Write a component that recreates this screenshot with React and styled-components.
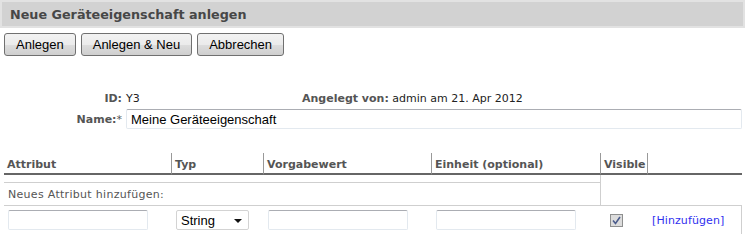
import React from 'react';
import styled, { createGlobalStyle } from 'styled-components';

const GlobalStyle = createGlobalStyle`
  body {
    margin: 0;
    background: #fff;
    font-family: "DejaVu Sans", Verdana, sans-serif;
  }
`;

const Page = styled.div`
  width: 745px;
  height: 252px;
  overflow: hidden;
`;

const TitleBar = styled.div`
  height: 24px;
  background: #d2d2d2;
  border: 2px solid #e2e2e2;
  display: flex;
  align-items: center;
  padding-left: 8px;
  font-size: 12.75px;
  font-weight: bold;
  color: #474747;
`;

const Toolbar = styled.div`
  display: flex;
  gap: 5px;
  padding: 5px 4px 0;
`;

const Button = styled.button`
  height: 23px;
  padding: 0 11px;
  font-family: "Liberation Sans", Arial, sans-serif;
  font-size: 13px;
  color: #000;
  border: 1px solid #707070;
  border-radius: 3px;
  background: linear-gradient(#f2f2f2 0%, #ebebeb 50%, #dddddd 51%, #cfcfcf 100%);
`;

const Meta = styled.div`
  display: grid;
  grid-template-columns: 122px 1fr;
  column-gap: 4px;
  row-gap: 3px;
  align-items: center;
  margin-top: 34px;
  padding-right: 3px;
  font-size: 11px;
  color: #222;
`;

const Label = styled.span`
  text-align: right;
  font-weight: bold;
  color: #555;
`;

const Required = styled.span`
  font-weight: normal;
`;

const ValueLine = styled.div`
  display: flex;
  height: 16px;
  align-items: center;
`;

const IdValue = styled.span`
  width: 176px;
`;

const TextInput = styled.input`
  box-sizing: border-box;
  width: ${p => p.$w || 140}px;
  height: 20px;
  padding: 0 4px;
  font-family: "Liberation Sans", Arial, sans-serif;
  font-size: 13px;
  color: #000;
  border: 1px solid #e3e9ef;
  border-top-color: #abadb3;
  border-radius: 2px;
  outline: none;
`;

const Grid = styled.div`
  display: grid;
  grid-template-columns: 167px 92px 168px 169px 47px 95px;
  margin: 24px 0 0 4px;
  font-size: 11px;
`;

const HeadCell = styled.div`
  height: 18px;
  padding: 2px 0 0 3px;
  font-weight: bold;
  color: #555;
  border-bottom: 2px solid #666;
  border-left: ${p => (p.$first ? 'none' : '1px solid #999')};
  display: flex;
  align-items: center;
`;

const AddCaption = styled.div`
  grid-column: 1 / span 4;
  margin-top: 7px;
  height: 22px;
  padding-left: 4px;
  display: flex;
  align-items: center;
  color: #555;
  letter-spacing: 0.3px;
  border-top: 1px solid #cfcfcf;
  border-bottom: 1px solid #cfcfcf;
`;

const SideCell = styled.div`
  grid-column: 5 / span 1;
  border-left: 1px solid #cfcfcf;
  border-bottom: 1px solid #cfcfcf;
`;

const EmptyCell = styled.div`
  border-bottom: 1px solid #cfcfcf;
`;

const Cell = styled.div`
  height: 28px;
  display: flex;
  align-items: center;
  padding-left: ${p => p.$pad || 5}px;
  border-right: ${p => (p.$last ? '1px solid #cfcfcf' : 'none')};
`;

const SelectBox = styled.div`
  position: relative;
  box-sizing: border-box;
  width: 73px;
  height: 20px;
  border: 1px solid #d3d3d3;
  border-radius: 2px;
  padding-left: 4px;
  display: flex;
  align-items: center;
  font-family: "Liberation Sans", Arial, sans-serif;
  font-size: 13px;
  color: #000;
`;

const Caret = styled.span`
  position: absolute;
  right: 6px;
  top: 8px;
  width: 0;
  height: 0;
  border-left: 4px solid transparent;
  border-right: 4px solid transparent;
  border-top: 4px solid #111;
`;

const Check = styled.span`
  box-sizing: border-box;
  width: 13px;
  height: 13px;
  border: 1px solid #8e8f8f;
  background: #dcdcdc;
  display: flex;
  align-items: center;
  justify-content: center;
`;

const AddLink = styled.a`
  color: #3030f0;
  letter-spacing: 0.1px;
  text-decoration: none;
  cursor: pointer;
`;

export default function App() {
  return (
    <Page>
      <GlobalStyle />
      <TitleBar>Neue Geräteeigenschaft anlegen</TitleBar>
      <Toolbar>
        <Button>Anlegen</Button>
        <Button>Anlegen &amp; Neu</Button>
        <Button>Abbrechen</Button>
      </Toolbar>

      <Meta>
        <Label>ID:</Label>
        <ValueLine>
          <IdValue>Y3</IdValue>
          <Label>Angelegt von:</Label>&nbsp;admin am 21. Apr 2012
        </ValueLine>
        <Label>
          Name:<Required>*</Required>
        </Label>
        <TextInput $w={616} defaultValue="Meine Geräteeigenschaft" />
      </Meta>

      <Grid>
        <HeadCell $first>Attribut</HeadCell>
        <HeadCell>Typ</HeadCell>
        <HeadCell>Vorgabewert</HeadCell>
        <HeadCell>Einheit (optional)</HeadCell>
        <HeadCell>Visible</HeadCell>
        <HeadCell>&nbsp;</HeadCell>

        <AddCaption>Neues Attribut hinzufügen:</AddCaption>
        <SideCell />
        <EmptyCell />

        <Cell $pad={4}><TextInput /></Cell>
        <Cell>
          <SelectBox>String<Caret /></SelectBox>
        </Cell>
        <Cell><TextInput /></Cell>
        <Cell><TextInput /></Cell>
        <Cell $pad={10}>
          <Check>
            <svg width="9" height="9" viewBox="0 0 9 9">
              <path d="M1 4.5 L3.5 7.5 L8 1" fill="none" stroke="#4b5c8c" strokeWidth="1.6" />
            </svg>
          </Check>
        </Cell>
        <Cell $last><AddLink>[Hinzufügen]</AddLink></Cell>
      </Grid>
    </Page>
  );
}
